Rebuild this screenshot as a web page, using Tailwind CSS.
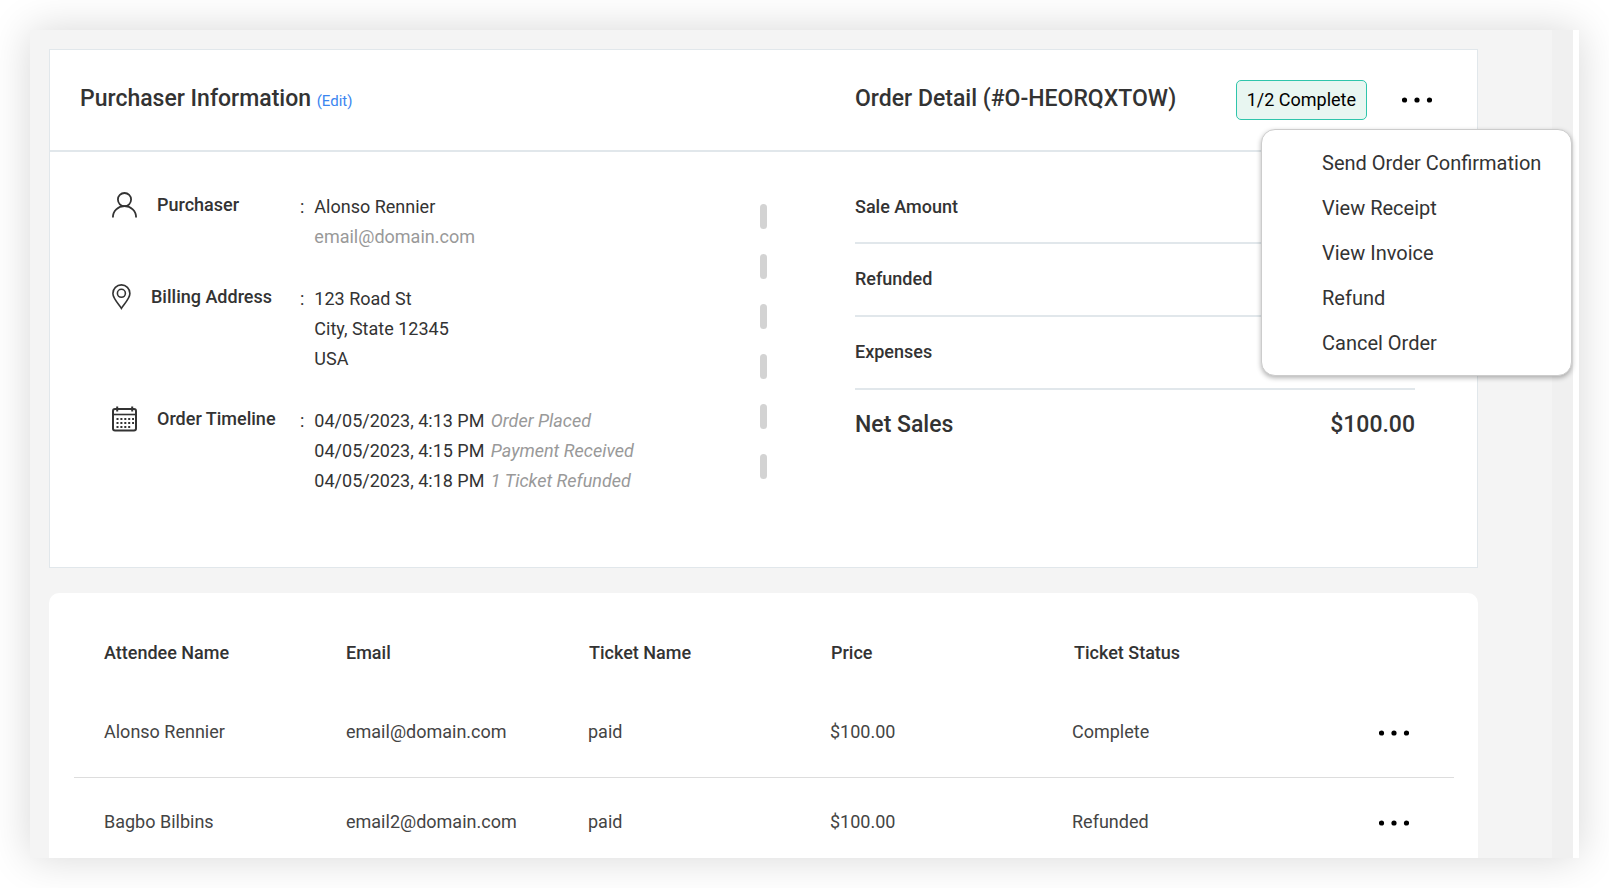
<!DOCTYPE html>
<html lang="en">
<head>
<meta charset="utf-8">
<meta name="viewport" content="width=device-width, initial-scale=1">
<title>Order Detail</title>
<script src="https://cdn.jsdelivr.net/npm/@tailwindcss/browser@4"></script>
</head>
<body class="h-screen overflow-hidden bg-white p-[30px] font-[Roboto,sans-serif] text-lg text-[#333]">
<svg class="hidden">
  <symbol id="dots" viewBox="0 0 30 6"><circle cx="2.5" cy="3" r="2.6"/><circle cx="15" cy="3" r="2.6"/><circle cx="27.5" cy="3" r="2.6"/></symbol>
</svg>
<div class="flex h-full overflow-hidden bg-white shadow-[0_0_40px_rgba(0,0,0,0.16)]">
  <main class="min-w-0 flex-1 bg-[#f4f4f4] pt-[19px] pr-[74px] pl-[19px]">

    <section class="border border-[#e1e7eb] bg-white">
      <header class="relative grid h-[102px] grid-cols-[1fr_7px_1fr] items-center border-b-2 border-[#e1e7eb]">
        <h2 class="pl-[30px] text-[23px] leading-8 font-medium">Purchaser Information <a href="#edit" class="text-[15px] font-normal text-[#3b86f0]">(Edit)</a></h2>
        <span></span>
        <div class="flex items-center pr-[45px] pl-[88px]">
          <h2 class="flex-1 pb-[3px] text-[23px] leading-8 font-medium whitespace-nowrap">Order Detail (#O-HEORQXTOW)</h2>
          <span class="flex h-10 items-center rounded-[5px] border border-[#2fc5ab] bg-[#e8f6f1] px-[10px] whitespace-nowrap text-black">1/2 Complete</span>
          <button type="button" aria-label="Order actions" aria-expanded="true" class="ml-[35px] text-black"><svg class="h-[6px] w-[30px] fill-current"><use href="#dots"/></svg></button>
        </div>
        <ul role="menu" class="absolute top-[79px] -right-[95px] z-10 w-[311px] rounded-[14px] border border-[#ccc] bg-white py-[10px] text-xl shadow-[0_2px_5px_rgba(0,0,0,0.3)]">
          <li role="none"><button type="button" role="menuitem" class="h-[45px] w-full pl-[60px] text-left whitespace-nowrap">Send Order Confirmation</button></li>
          <li role="none"><button type="button" role="menuitem" class="h-[45px] w-full pl-[60px] text-left">View Receipt</button></li>
          <li role="none"><button type="button" role="menuitem" class="h-[45px] w-full pl-[60px] text-left">View Invoice</button></li>
          <li role="none"><button type="button" role="menuitem" class="h-[45px] w-full pl-[60px] text-left">Refund</button></li>
          <li role="none"><button type="button" role="menuitem" class="h-[45px] w-full pl-[60px] text-left">Cancel Order</button></li>
        </ul>
      </header>

      <div class="grid grid-cols-[1fr_7px_1fr]">
        <dl class="flex flex-col gap-8 pt-10 pb-[71px] pl-[62px] leading-[30px]">
          <div class="flex items-start">
            <dt class="flex h-[26px] w-[188px] items-center gap-5 font-medium">
              <svg class="h-[26px] w-[25px]" viewBox="0 0 25 26" fill="none" stroke="currentColor" stroke-width="1.8"><circle cx="12.500" cy="7.600" r="6.600"/><path d="M.900 25.500C.900 18.800 6 14.200 12.500 14.200S24.100 18.800 24.100 25.500"/></svg>
              Purchaser
            </dt>
            <dd class="flex gap-[10px]"><span>:</span><div>Alonso Rennier<br><span class="text-[#999]">email@domain.com</span></div></dd>
          </div>
          <div class="flex items-start">
            <dt class="flex h-[26px] w-[188px] items-center gap-5 font-medium">
              <svg class="h-[26px] w-[19px]" viewBox="0 0 19 26" fill="none" stroke="currentColor" stroke-width="1.600"><path d="M9.400 24.300C7 20.200.900 14.500.900 9.400a8.500 8.500 0 0 1 17 0c0 5.100-6.100 10.800-8.500 14.900z"/><circle cx="9.400" cy="9.300" r="4"/></svg>
              Billing Address
            </dt>
            <dd class="flex gap-[10px]"><span>:</span><div>123 Road St<br>City, State 12345<br>USA</div></dd>
          </div>
          <div class="flex items-start">
            <dt class="flex h-[26px] w-[188px] items-center gap-5 font-medium">
              <svg class="h-[26px] w-[25px]" viewBox="0 0 25 26" fill="none" stroke="currentColor"><rect x="1" y="3" width="23" height="21.600" rx="2" stroke-width="2"/><path d="M1 8.500h23" stroke-width="1.600"/><path d="M5.200.500v5M20.200.500v5" stroke-width="2"/><path d="M4.500 13h17.500M4.500 17h17.500M4.500 21h14" stroke-width="2" stroke-dasharray="2 1.900"/></svg>
              Order Timeline
            </dt>
            <dd class="flex gap-[10px]"><span>:</span>
              <ul class="whitespace-nowrap">
                <li>04/05/2023, 4:13 PM <i class="ml-[2px] text-[#999]">Order Placed</i></li>
                <li>04/05/2023, 4:15 PM <i class="ml-[2px] text-[#999]">Payment Received</i></li>
                <li>04/05/2023, 4:18 PM <i class="ml-[2px] text-[#999]">1 Ticket Refunded</i></li>
              </ul>
            </dd>
          </div>
        </dl>

        <div class="flex flex-col gap-[25px] pt-[52px]" aria-hidden="true">
          <span class="h-[25px] rounded-full bg-[#d3d3d3]"></span>
          <span class="h-[25px] rounded-full bg-[#d3d3d3]"></span>
          <span class="h-[25px] rounded-full bg-[#d3d3d3]"></span>
          <span class="h-[25px] rounded-full bg-[#d3d3d3]"></span>
          <span class="h-[25px] rounded-full bg-[#d3d3d3]"></span>
          <span class="h-[25px] rounded-full bg-[#d3d3d3]"></span>
        </div>

        <div class="pt-[19px] pr-[62px] pl-[88px] font-medium">
          <div class="flex h-[73px] items-center border-b-2 border-[#e1e7eb]">Sale Amount</div>
          <div class="flex h-[73px] items-center border-b-2 border-[#e1e7eb] pb-px">Refunded</div>
          <div class="flex h-[73px] items-center border-b-2 border-[#e1e7eb] pb-px">Expenses</div>
          <div class="flex h-[70px] items-center justify-between text-[23px]"><span>Net Sales</span><span>$100.00</span></div>
        </div>
      </div>
    </section>

    <section class="mt-[25px] rounded-t-[10px] bg-white pt-[25px] pr-6 pl-[25px]">
      <table class="w-full table-fixed text-left text-[#444]">
        <colgroup><col class="w-[242px]"><col class="w-[243px]"><col class="w-[242px]"><col class="w-[243px]"><col class="w-[242px]"><col></colgroup>
        <thead>
          <tr class="h-[69px] text-[#333]">
            <th class="pl-[30px] font-medium">Attendee Name</th>
            <th class="pl-[30px] font-medium">Email</th>
            <th class="pl-[30px] font-medium">Ticket Name</th>
            <th class="pl-[30px] font-medium">Price</th>
            <th class="pl-[30px] font-medium">Ticket Status</th>
            <td></td>
          </tr>
        </thead>
        <tbody>
          <tr class="h-[90px] border-b border-[#ddd]">
            <td class="pl-[30px]">Alonso Rennier</td>
            <td class="pl-[30px]">email@domain.com</td>
            <td class="pl-[29px]">paid</td>
            <td class="pl-[29px]">$100.00</td>
            <td class="pl-[28px]">Complete</td>
            <td class="pt-[2px] pr-[45px]"><button type="button" aria-label="Actions for Alonso Rennier" class="ml-auto block text-black"><svg class="h-[6px] w-[30px] fill-current"><use href="#dots"/></svg></button></td>
          </tr>
          <tr class="h-[90px]">
            <td class="pl-[30px]">Bagbo Bilbins</td>
            <td class="pl-[30px]">email2@domain.com</td>
            <td class="pl-[29px]">paid</td>
            <td class="pl-[29px]">$100.00</td>
            <td class="pl-[28px]">Refunded</td>
            <td class="pt-[2px] pr-[45px]"><button type="button" aria-label="Actions for Bagbo Bilbins" class="ml-auto block text-black"><svg class="h-[6px] w-[30px] fill-current"><use href="#dots"/></svg></button></td>
          </tr>
        </tbody>
      </table>
    </section>
  </main>
  <div class="mr-[6px] w-[21px] bg-[#f0f0f0]"></div>
</div>
</body>
</html>
